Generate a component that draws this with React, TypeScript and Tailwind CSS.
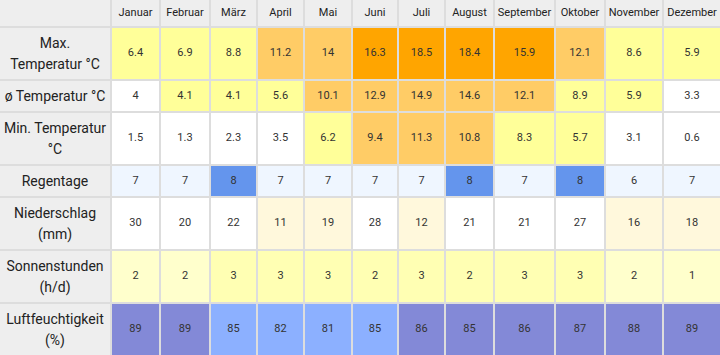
import { Fragment } from "react";

const months = ["Januar", "Februar", "März", "April", "Mai", "Juni", "Juli", "August", "September", "Oktober", "November", "Dezember"];

type Row = { label: string[]; cells: [string, string][] };

const Y = "bg-[#ffff99]";
const O1 = "bg-[#ffcc66]";
const O2 = "bg-[#ffa500]";
const W = "bg-white";
const RL = "bg-[#eff6ff]";
const RB = "bg-[#6495ed]";
const NL = "bg-[#fff8dc]";
const S1 = "bg-[#ffffcc]";
const S2 = "bg-[#ffffb3]";
const L1 = "bg-[#8389d7]";
const L2 = "bg-[#8cb0ff]";

const rows: Row[] = [
  {
    label: ["Max.", "Temperatur °C"],
    cells: [["6.4", Y], ["6.9", Y], ["8.8", Y], ["11.2", O1], ["14", O1], ["16.3", O2], ["18.5", O2], ["18.4", O2], ["15.9", O2], ["12.1", O1], ["8.6", Y], ["5.9", Y]],
  },
  {
    label: ["ø Temperatur °C"],
    cells: [["4", W], ["4.1", Y], ["4.1", Y], ["5.6", Y], ["10.1", O1], ["12.9", O1], ["14.9", O1], ["14.6", O1], ["12.1", O1], ["8.9", Y], ["5.9", Y], ["3.3", W]],
  },
  {
    label: ["Min. Temperatur", "°C"],
    cells: [["1.5", W], ["1.3", W], ["2.3", W], ["3.5", W], ["6.2", Y], ["9.4", O1], ["11.3", O1], ["10.8", O1], ["8.3", Y], ["5.7", Y], ["3.1", W], ["0.6", W]],
  },
  {
    label: ["Regentage"],
    cells: [["7", RL], ["7", RL], ["8", RB], ["7", RL], ["7", RL], ["7", RL], ["7", RL], ["8", RB], ["7", RL], ["8", RB], ["6", RL], ["7", RL]],
  },
  {
    label: ["Niederschlag", "(mm)"],
    cells: [["30", W], ["20", W], ["22", W], ["11", NL], ["19", NL], ["28", W], ["12", NL], ["21", W], ["21", W], ["27", W], ["16", NL], ["18", NL]],
  },
  {
    label: ["Sonnenstunden", "(h/d)"],
    cells: [["2", S1], ["2", S1], ["3", S2], ["3", S2], ["3", S2], ["2", S2], ["3", S2], ["2", S2], ["3", S2], ["3", S2], ["2", S1], ["1", S1]],
  },
  {
    label: ["Luftfeuchtigkeit", "(%)"],
    cells: [["89", L1], ["89", L1], ["85", L2], ["82", L2], ["81", L2], ["85", L2], ["86", L1], ["85", L1], ["86", L1], ["87", L1], ["88", L1], ["89", L1]],
  },
];

export default function App() {
  return (
    <div
      className="w-[720px] h-[355px] overflow-hidden bg-[#dddddd] grid gap-[2px] grid-cols-[110px_47px_48px_45px_45px_46px_44px_45px_47px_59px_48px_56px_56px] grid-rows-[26px_51px_30px_51px_30px_51px_51px_51px] text-[#222]"
      style={{ fontFamily: "Roboto, 'Liberation Sans', sans-serif" }}
    >
      <div className="bg-[#eeeeee]" />
      {months.map((m) => (
        <div key={m} className="bg-[#eeeeee] flex items-center justify-center text-[11px] text-[#222]">
          {m}
        </div>
      ))}
      {rows.map((r) => (
        <Fragment key={r.label.join(" ")}>
          <div className="bg-[#eeeeee] flex flex-col items-center justify-center text-[14px] leading-[21px] text-center text-[#222]">
            {r.label.map((l) => (
              <span key={l}>{l}</span>
            ))}
          </div>
          {r.cells.map(([v, bg], i) => (
            <div key={i} className={`${bg} flex items-center justify-center text-[11px] text-[#333]`}>
              {v}
            </div>
          ))}
        </Fragment>
      ))}
    </div>
  );
}
